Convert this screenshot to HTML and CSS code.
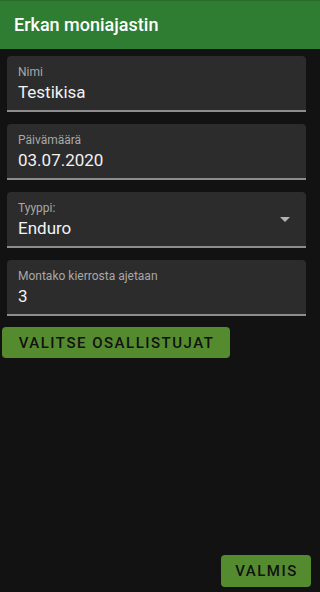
FILE: index.html
```html
<!DOCTYPE html>
<html lang="fi">
<head>
<meta charset="utf-8">
<title>Erkan moniajastin</title>
<link rel="stylesheet" href="styles.css">
</head>
<body>
<header class="appbar">Erkan moniajastin</header>
<div class="app">
  <main class="form">
    <div class="field">
      <div class="field-text">
        <span class="label">Nimi</span>
        <span class="value">Testikisa</span>
      </div>
    </div>
    <div class="field">
      <div class="field-text">
        <span class="label">Päivämäärä</span>
        <span class="value">03.07.2020</span>
      </div>
    </div>
    <div class="field field-select">
      <div class="field-text">
        <span class="label">Tyyppi:</span>
        <span class="value">Enduro</span>
      </div>
      <span class="arrow"></span>
    </div>
    <div class="field">
      <div class="field-text">
        <span class="label">Montako kierrosta ajetaan</span>
        <span class="value">3</span>
      </div>
    </div>
    <div class="actions">
      <button class="btn btn-wide">Valitse osallistujat</button>
    </div>
  </main>
  <footer class="footer">
    <button class="btn btn-done">Valmis</button>
  </footer>
</div>
</body>
</html>
```
FILE: styles.css
```css
html, body {
  margin: 0;
  padding: 0;
  background: #121212;
}
body {
  font-family: Roboto, "Liberation Sans", sans-serif;
  color: #fff;
}
.appbar {
  box-sizing: border-box;
  height: 49px;
  background: #2e7d32;
  border-top: 1px solid #2a6d2d;
  padding: 0 14px 1px;
  display: flex;
  align-items: center;
  font-size: 18px;
  font-weight: 500;
  color: #fff;
}
.app {
  display: flex;
  flex-direction: column;
  width: 313px;
  height: 543px;
  box-sizing: border-box;
}
.form {
  display: flex;
  flex-direction: column;
  gap: 12px;
  padding-top: 7px;
}
.field {
  box-sizing: border-box;
  height: 56px;
  margin: 0 7px;
  background: #2c2c2c;
  border-radius: 4px 4px 0 0;
  border-bottom: 2px solid #8d8d8d;
  display: flex;
  align-items: center;
  padding: 0 16px 0 11px;
}
.field-text {
  flex: 1;
  display: flex;
  flex-direction: column;
  padding-top: 1px;
}
.label {
  font-size: 12px;
  line-height: 14px;
  color: #a8a8a8;
}
.value {
  font-size: 17px;
  line-height: 22px;
  color: #f2f2f2;
  margin-top: 2px;
}
.arrow {
  width: 0;
  height: 0;
  border-left: 5px solid transparent;
  border-right: 5px solid transparent;
  border-top: 5px solid #b4b4b4;
}
.actions {
  display: flex;
  margin-top: -1px;
}
.btn {
  font-family: Roboto, "Liberation Sans", sans-serif;
  font-weight: 500;
  text-transform: uppercase;
  background: #558b2f;
  color: #111;
  border: none;
  border-radius: 4px;
  letter-spacing: 1.5px;
  cursor: pointer;
}
.btn-wide {
  margin-left: 2px;
  width: 228px;
  height: 31px;
  font-size: 15px;
  padding: 0 0 0 1px;
}
.footer {
  margin-top: auto;
  display: flex;
  justify-content: flex-end;
  padding: 0 2px 5px 0;
}
.btn-done {
  width: 90px;
  height: 32px;
  font-size: 15px;
  padding: 0 0 0 1px;
}
```
